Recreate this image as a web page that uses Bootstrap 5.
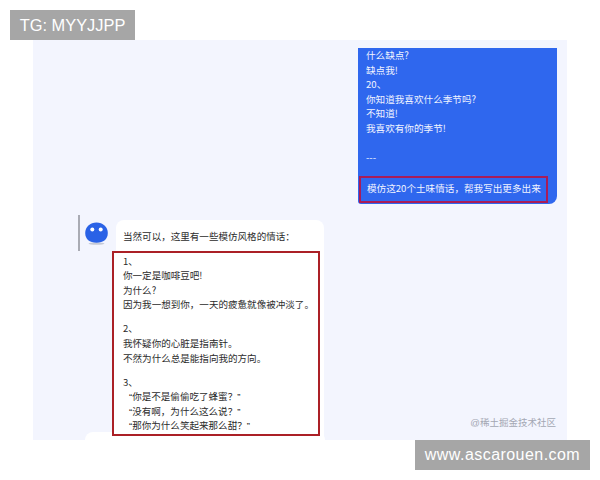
<!DOCTYPE html>
<html lang="zh">
<head>
<meta charset="utf-8">
<title>Chat</title>
<link href="https://cdn.jsdelivr.net/npm/bootstrap@5.3.0/dist/css/bootstrap.min.css" rel="stylesheet">
<style>
html,body{width:600px;height:480px;overflow:hidden;background:#fff;}
body{font-family:"Liberation Sans","Noto Sans CJK SC",sans-serif;}
.stage{position:relative;width:600px;height:480px;padding:40px 33px;}
.tag-mark{position:absolute;background:#a6a6a6;color:#fff;height:30px;line-height:30px;text-align:center;}
.tag-tg{left:10px;top:10px;width:125px;font-size:16.4px;}
.tag-web{left:415px;top:440px;width:175px;font-size:16px;letter-spacing:.45px;}
.panel{position:relative;height:400px;background:#f3f5fe;overflow:hidden;padding-top:8px;}
.blue-msg,.white-msg{font-family:"Noto Sans CJK SC","Liberation Sans",sans-serif;}
.blue-msg{width:199px;height:156px;margin-left:325px;background:#2f67ee;color:#f1f4ff;border-radius:0 0 8px 3px;font-size:9.6px;line-height:14.6px;overflow:hidden;position:relative;padding:0 0 0 8px;}
.blue-msg p{margin:0;height:14.6px;white-space:nowrap;}
.blue-ask{position:absolute;left:1px;bottom:1px;width:189px;height:27px;border:2px solid #a81c58;padding:3px 0 0 6px;line-height:15px;white-space:nowrap;}
.reply{margin-top:16px;padding-left:45px;}
.v-rule{width:2px;height:36px;background:#a9abb4;margin-top:-5px;}
.avatar{width:23px;height:23px;margin:2px 8px 0 5px;flex:none;}
.white-msg{width:208px;height:230px;background:#fff;border-radius:8px;font-size:9.55px;color:#2b2b2b;line-height:14.6px;padding:9px 0 0 7px;white-space:nowrap;}
.white-msg p{margin:0;height:14.6px;}
.answers{width:208px;height:185px;margin:7px 0 0 -11px;border:2px solid #ab2026;padding:1px 0 0 9px;background:#fff;position:relative;}
.answers .gap{margin-top:9.4px;}
.answers .ind{padding:1px 0 0 6px;font-family:"Liberation Sans","Noto Sans CJK SC",sans-serif;}
.foot-bar{position:absolute;left:52px;top:392px;width:240px;height:30px;background:#fff;border-radius:8px 8px 0 0;}
.credit{position:absolute;right:11px;top:377px;font-size:9.5px;color:#a3a7b3;line-height:12px;}
</style>
</head>
<body>
<div class="stage">
  <div class="panel">
    <div class="blue-msg">
      <p>什么缺点?</p><p>缺点我!</p><p>20、</p><p>你知道我喜欢什么季节吗?</p><p>不知道!</p><p>我喜欢有你的季节!</p><p>&nbsp;</p><p>---</p>
      <div class="blue-ask">模仿这20个土味情话，帮我写出更多出来</div>
    </div>
    <div class="foot-bar"></div>
    <div class="reply d-flex align-items-start position-relative">
      <div class="v-rule"></div>
      <svg class="avatar" viewBox="0 0 23 23" aria-hidden="true">
        <ellipse cx="11.5" cy="21.6" rx="8" ry="1.2" fill="#c5c9d6"/>
        <path d="M11.5 0.5C17.8 0.5 22.8 5 22.8 11C22.8 17 18.5 20.8 11.5 20.8C4.5 20.8 0.2 17 0.2 11C0.2 5 5.2 0.5 11.5 0.5Z" fill="#2a62e6"/>
        <circle cx="7.3" cy="7.6" r="2" fill="#fff"/>
        <circle cx="15.7" cy="7.6" r="2" fill="#fff"/>
      </svg>
      <div class="white-msg">
        <p>当然可以，这里有一些模仿风格的情话：</p>
        <div class="answers">
          <p>1、</p><p>你一定是咖啡豆吧!</p><p>为什么?</p><p>因为我一想到你，一天的疲惫就像被冲淡了。</p>
          <p class="gap">2、</p><p>我怀疑你的心脏是指南针。</p><p>不然为什么总是能指向我的方向。</p>
          <p class="gap">3、</p><p class="ind">“你是不是偷偷吃了蜂蜜？”</p><p class="ind">“没有啊，为什么这么说？”</p><p class="ind">“那你为什么笑起来那么甜？”</p>
        </div>
      </div>
    </div>
    <div class="credit">@稀土掘金技术社区</div>
  </div>
  <div class="tag-mark tag-tg">TG: MYYJJPP</div>
  <div class="tag-mark tag-web">www.ascarouen.com</div>
</div>
<script src="https://cdn.jsdelivr.net/npm/bootstrap@5.3.0/dist/js/bootstrap.bundle.min.js"></script>
</body>
</html>
